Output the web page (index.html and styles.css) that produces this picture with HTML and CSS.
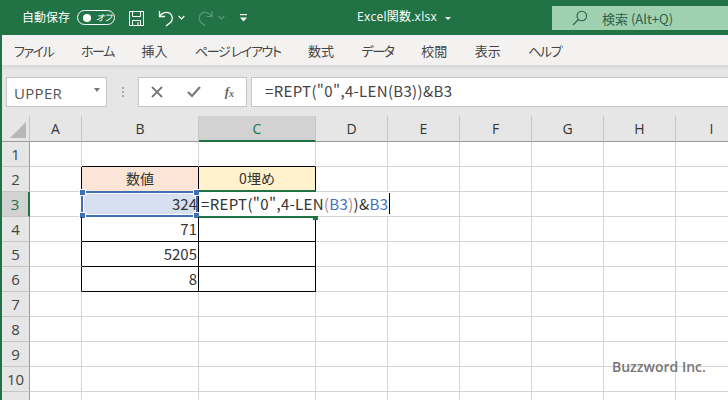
FILE: index.html
```html
<!DOCTYPE html>
<html lang="ja">
<head>
<meta charset="utf-8">
<title>Excel関数.xlsx</title>
<link rel="stylesheet" href="styles.css">
</head>
<body>
<div class="app">
  <header class="titlebar">
    <span class="autosave">自動保存</span>
    <span class="toggle"><i class="knob"></i><span class="off">オフ</span></span>
    <svg class="qa save" width="17" height="17" viewBox="0 0 17 17" fill="none" stroke="#fff" stroke-width="1"><path d="M1.5 1.5h14v14h-14z"/><path d="M4.5 1.5v5h8v-5M4.5 15.5v-5h8v5M10 12v3"/></svg>
    <svg class="qa undo" width="16" height="18" viewBox="0 0 16 18" fill="none" stroke="#fff" stroke-width="1.3"><path d="M1.5 2v5.5H7"/><path d="M1.8 7.2C4 3.5 9 2.5 12 4.500c3 2.200 3 6.500 .5 9L8 17"/></svg>
    <svg class="qa chev1" width="7" height="5" viewBox="0 0 7 5" fill="none" stroke="#fff" stroke-width="1.2"><path d="M.7 1l2.800 2.800L6.300 1"/></svg>
    <svg class="qa redo" width="17" height="18" viewBox="0 0 17 18" fill="none" stroke="#5b9a78" stroke-width="1.2"><path d="M15 2v5.500H9.500"/><path d="M14.700 7.200C12.500 3.500 7.500 2.500 4.500 4.500c-3 2.200-3 6.500-.5 9L8.500 17"/></svg>
    <svg class="qa chev2" width="7" height="5" viewBox="0 0 7 5" fill="none" stroke="#5b9a78" stroke-width="1.2"><path d="M.7 1l2.800 2.800L6.300 1"/></svg>
    <svg class="qa custom" width="7" height="8" viewBox="0 0 7 8" fill="#fff"><rect y="0" width="7" height="1.200"/><path d="M0 3.500h7L3.500 7.500z"/></svg>
    <span class="docname">Excel関数.xlsx</span>
    <i class="doccaret"></i>
    <div class="search">
      <svg class="lens" width="16" height="16" viewBox="0 0 16 16" fill="none" stroke="#2f6048" stroke-width="1.100"><circle cx="9.800" cy="6" r="4.800"/><path d="M6.400 9.500L1 15"/></svg>
      <span class="searchtext">検索 (Alt+Q)</span>
    </div>
  </header>
  <nav class="tabs">
    <span class="kana">ファイル</span><span class="kana">ホーム</span><span>挿入</span><span class="kana">ページ レイアウト</span><span>数式</span><span class="kana">データ</span><span>校閲</span><span>表示</span><span class="kana">ヘルプ</span>
  </nav>
  <section class="fbar">
    <div class="namebox"><span>UPPER</span><i class="namecaret"></i></div>
    <div class="grip"><i></i><i></i><i></i></div>
    <div class="fbtns">
      <svg width="12" height="12" viewBox="0 0 12 12" stroke="#7a7a7a" stroke-width="1.800" fill="none"><path d="M1 1l10 10M11 1L1 11"/></svg>
      <svg width="14" height="12" viewBox="0 0 14 12" stroke="#7a7a7a" stroke-width="2.200" fill="none"><path d="M1 6l4 4 8-9"/></svg>
      <span class="fx">f<sub>x</sub></span>
    </div>
    <div class="formula">=REPT("0",4-LEN(B3))&amp;B3</div>
  </section>
  <main class="sheet">
    <div class="corner"><i></i></div><div class="ch">A</div><div class="ch">B</div><div class="ch sel">C</div><div class="ch">D</div><div class="ch">E</div><div class="ch">F</div><div class="ch">G</div><div class="ch">H</div><div class="ch">I</div>

    <div class="rh">1</div><div class="c"></div><div class="c bb"></div><div class="c bb"></div><div class="c"></div><div class="c"></div><div class="c"></div><div class="c"></div><div class="c"></div><div class="c"></div>

    <div class="rh">2</div><div class="c br"></div><div class="c box head1">数値</div><div class="c box head2">0埋め</div><div class="c"></div><div class="c"></div><div class="c"></div><div class="c"></div><div class="c"></div><div class="c"></div>

    <div class="rh cur">3</div><div class="c br"></div><div class="c box num active"><span class="range"><b class="h tl"></b><b class="h tr"></b><b class="h bl"></b><b class="h br2"></b></span><span class="val">324</span></div><div class="c box edit"><span class="editline"></span><span class="editor">=REPT("0",4-LEN<span class="pink">(</span><span class="blue">B3</span><span class="pink">)</span>)&amp;<span class="blue">B3</span><i class="caret"></i></span></div><div class="c"></div><div class="c"></div><div class="c"></div><div class="c"></div><div class="c"></div><div class="c"></div>

    <div class="rh">4</div><div class="c br"></div><div class="c box num">71</div><div class="c box"></div><div class="c"></div><div class="c"></div><div class="c"></div><div class="c"></div><div class="c"></div><div class="c"></div>

    <div class="rh">5</div><div class="c br"></div><div class="c box num">5205</div><div class="c box"></div><div class="c"></div><div class="c"></div><div class="c"></div><div class="c"></div><div class="c"></div><div class="c"></div>

    <div class="rh">6</div><div class="c br"></div><div class="c box num">8</div><div class="c box"></div><div class="c"></div><div class="c"></div><div class="c"></div><div class="c"></div><div class="c"></div><div class="c"></div>

    <div class="rh">7</div><div class="c"></div><div class="c"></div><div class="c"></div><div class="c"></div><div class="c"></div><div class="c"></div><div class="c"></div><div class="c"></div><div class="c"></div>

    <div class="rh">8</div><div class="c"></div><div class="c"></div><div class="c"></div><div class="c"></div><div class="c"></div><div class="c"></div><div class="c"></div><div class="c"></div><div class="c"></div>

    <div class="rh">9</div><div class="c"></div><div class="c"></div><div class="c"></div><div class="c"></div><div class="c"></div><div class="c"></div><div class="c"></div><div class="c"></div><div class="c"></div>

    <div class="rh">10</div><div class="c"></div><div class="c"></div><div class="c"></div><div class="c"></div><div class="c"></div><div class="c"></div><div class="c"></div><div class="c"></div><div class="c"></div>

    <div class="rh">11</div><div class="c"></div><div class="c"></div><div class="c"></div><div class="c"></div><div class="c"></div><div class="c"></div><div class="c"></div><div class="c"></div><div class="c"></div>
  </main>
  <div class="watermark">Buzzword Inc.</div>
</div>
</body>
</html>
```
FILE: styles.css
```css
* { box-sizing: border-box; }
html, body { margin: 0; height: 100%; overflow: hidden; background: #fff; }
body { font-family: "Noto Sans CJK JP", "Noto Sans", sans-serif; color: #333; }
.app { position: relative; width: 728px; height: 400px; overflow: hidden; border-left: 2px solid #217346; }

.titlebar { position: relative; height: 35px; margin-left: -2px; background: #217346; color: #fff; }
.autosave { position: absolute; left: 22px; top: 8px; font-size: 12px; line-height: 18px; }
.toggle { position: absolute; left: 77px; top: 10px; width: 38px; height: 15px; border: 1px solid #fff; border-radius: 8px; }
.knob { position: absolute; left: 5px; top: 2.500px; width: 8px; height: 8px; border-radius: 50%; background: #fff; }
.off { position: absolute; left: 18px; top: 0; font-size: 9px; line-height: 13px; font-style: italic; font-feature-settings: "palt"; }
.qa { position: absolute; }
.save { left: 128px; top: 10px; }
.undo { left: 158px; top: 9px; }
.chev1 { left: 178px; top: 15px; }
.redo { left: 197px; top: 9px; }
.chev2 { left: 218px; top: 15px; }
.custom { left: 240px; top: 14px; }
.docname { position: absolute; left: 357px; top: 8px; font-family: "Open Sans", "Noto Sans CJK JP", sans-serif; font-size: 12px; letter-spacing: .25px; line-height: 18px; white-space: nowrap; }
.doccaret { position: absolute; left: 445px; top: 17px; border: 3px solid transparent; border-top-color: #fff; }
.search { position: absolute; left: 552px; top: 6px; width: 176px; height: 24px; background: #9fd0b0; display: flex; align-items: center; padding-left: 20px; color: #2f6048; }
.searchtext { margin-left: 14px; font-size: 13px; white-space: nowrap; }

.tabs { height: 30px; background: #f3f2f1; display: flex; align-items: center; gap: 27.500px; padding-left: 12px; font-size: 13px; color: #444; font-feature-settings: "palt"; }
.tabs span { white-space: nowrap; }
.tabs .kana { letter-spacing: -1.400px; }

.fbar { height: 51px; background: linear-gradient(#d8d8d8, #e6e6e6 5px); display: flex; align-items: flex-start; padding: 12px 0 0 4px; }
.namebox { position: relative; width: 101px; height: 30px; background: #fff; border: 1px solid #c6c6c6; padding-left: 7px; font-family: "Open Sans", sans-serif; font-size: 15px; letter-spacing: .3px; line-height: 30px; color: #555; }
.namecaret { position: absolute; left: 87px; top: 10px; border: 3.500px solid transparent; border-top: 4px solid #777; }
.grip { width: 31px; height: 30px; display: flex; flex-direction: column; align-items: center; justify-content: center; gap: 2px; }
.grip i { width: 2px; height: 2px; background: #aaa; }
.fbtns { width: 109px; height: 30px; background: #fff; border: 1px solid #c6c6c6; display: flex; align-items: center; justify-content: space-between; padding: 0 12px 0 12px; }
.fx { font-family: "Liberation Serif", serif; font-style: italic; font-weight: 700; font-size: 13px; color: #666; line-height: 14px; }
.fx sub { font-size: 10px; vertical-align: -1px; line-height: 0; }
.formula { margin-left: 4px; flex: 1; height: 30px; background: #fff; border: 1px solid #c6c6c6; border-right: 0; padding-left: 13px; font-size: 15px; line-height: 25px; color: #444; white-space: nowrap; letter-spacing: .33px; }

.sheet { display: grid; grid-template-columns: 28px 52px 117px 117px repeat(6, 72px); grid-template-rows: 26px; grid-auto-rows: 25px; font-size: 14px; }
.corner { position: relative; background: #e6e6e6; border-right: 1px solid #c6c6c6; border-bottom: 1px solid #9a9a9a; }
.corner i { position: absolute; right: 3px; bottom: 3px; width: 0; height: 0; border-style: solid; border-width: 0 0 16px 16px; border-color: transparent transparent #b7b7b7 transparent; }
.ch { background: #e6e6e6; border-right: 1px solid #c6c6c6; border-bottom: 1px solid #9a9a9a; text-align: center; line-height: 25px; color: #333; font-family: "Open Sans", sans-serif; font-size: 14px; }
.ch.sel { background: #d2d2d2; color: #217346; border-bottom: 2px solid #217346; }
.rh { background: #e6e6e6; border-right: 1px solid #9a9a9a; border-bottom: 1px solid #c6c6c6; text-align: center; line-height: 24px; color: #444; font-family: "Open Sans", sans-serif; font-size: 15px; }
.rh.cur { background: #d2d2d2; color: #217346; border-right: 2px solid #217346; }
.c { position: relative; border-right: 1px solid #d4d4d4; border-bottom: 1px solid #d4d4d4; line-height: 23px; white-space: nowrap; }
.c.br { border-right-color: #000; }
.c.bb { border-bottom-color: #000; }
.c.box { border-right-color: #000; border-bottom-color: #000; text-align: center; }
.head1 { background: #fce4d6; }
.head2 { background: #fff2cc; }
.c.num { text-align: right; padding-right: 1px; font-size: 15px; }
.active { background: #d6e0f0; }
.val { position: relative; }
.range { position: absolute; left: -1px; top: -1px; right: 0; bottom: -1px; border: 2px solid #3f6fb5; box-shadow: inset 0 0 0 1px #fff; }
.h { position: absolute; width: 5px; height: 5px; background: #3f6fb5; outline: 1px solid #fff; }
.tl { left: -3px; top: -3px; }
.tr { right: -3px; top: -3px; }
.bl { left: -3px; bottom: -3px; }
.br2 { right: -3px; bottom: -3px; }
.c.edit { text-align: left; z-index: 2; }
.editline { position: absolute; left: 0; right: -1px; top: -2px; bottom: -2px; border-top: 2px solid #217346; border-bottom: 2px solid #217346; }
.editline::after { content: ""; position: absolute; right: -2px; bottom: -4px; width: 5px; height: 5px; background: #217346; }
.editor { position: absolute; left: 0; top: 0; height: 24px; padding: 0 2px; width: 191px; background: #fff; font-size: 15px; line-height: 23px; color: #333; letter-spacing: .33px; }
.blue { color: #4472c4; }
.pink { color: #c0808a; }
.caret { position: absolute; right: 0; top: 1px; width: 1px; height: 21px; background: #000; }

.watermark { position: absolute; left: 610px; top: 357px; font-family: "Open Sans", sans-serif; font-size: 14px; font-weight: 600; line-height: 20px; color: #777; }
```
